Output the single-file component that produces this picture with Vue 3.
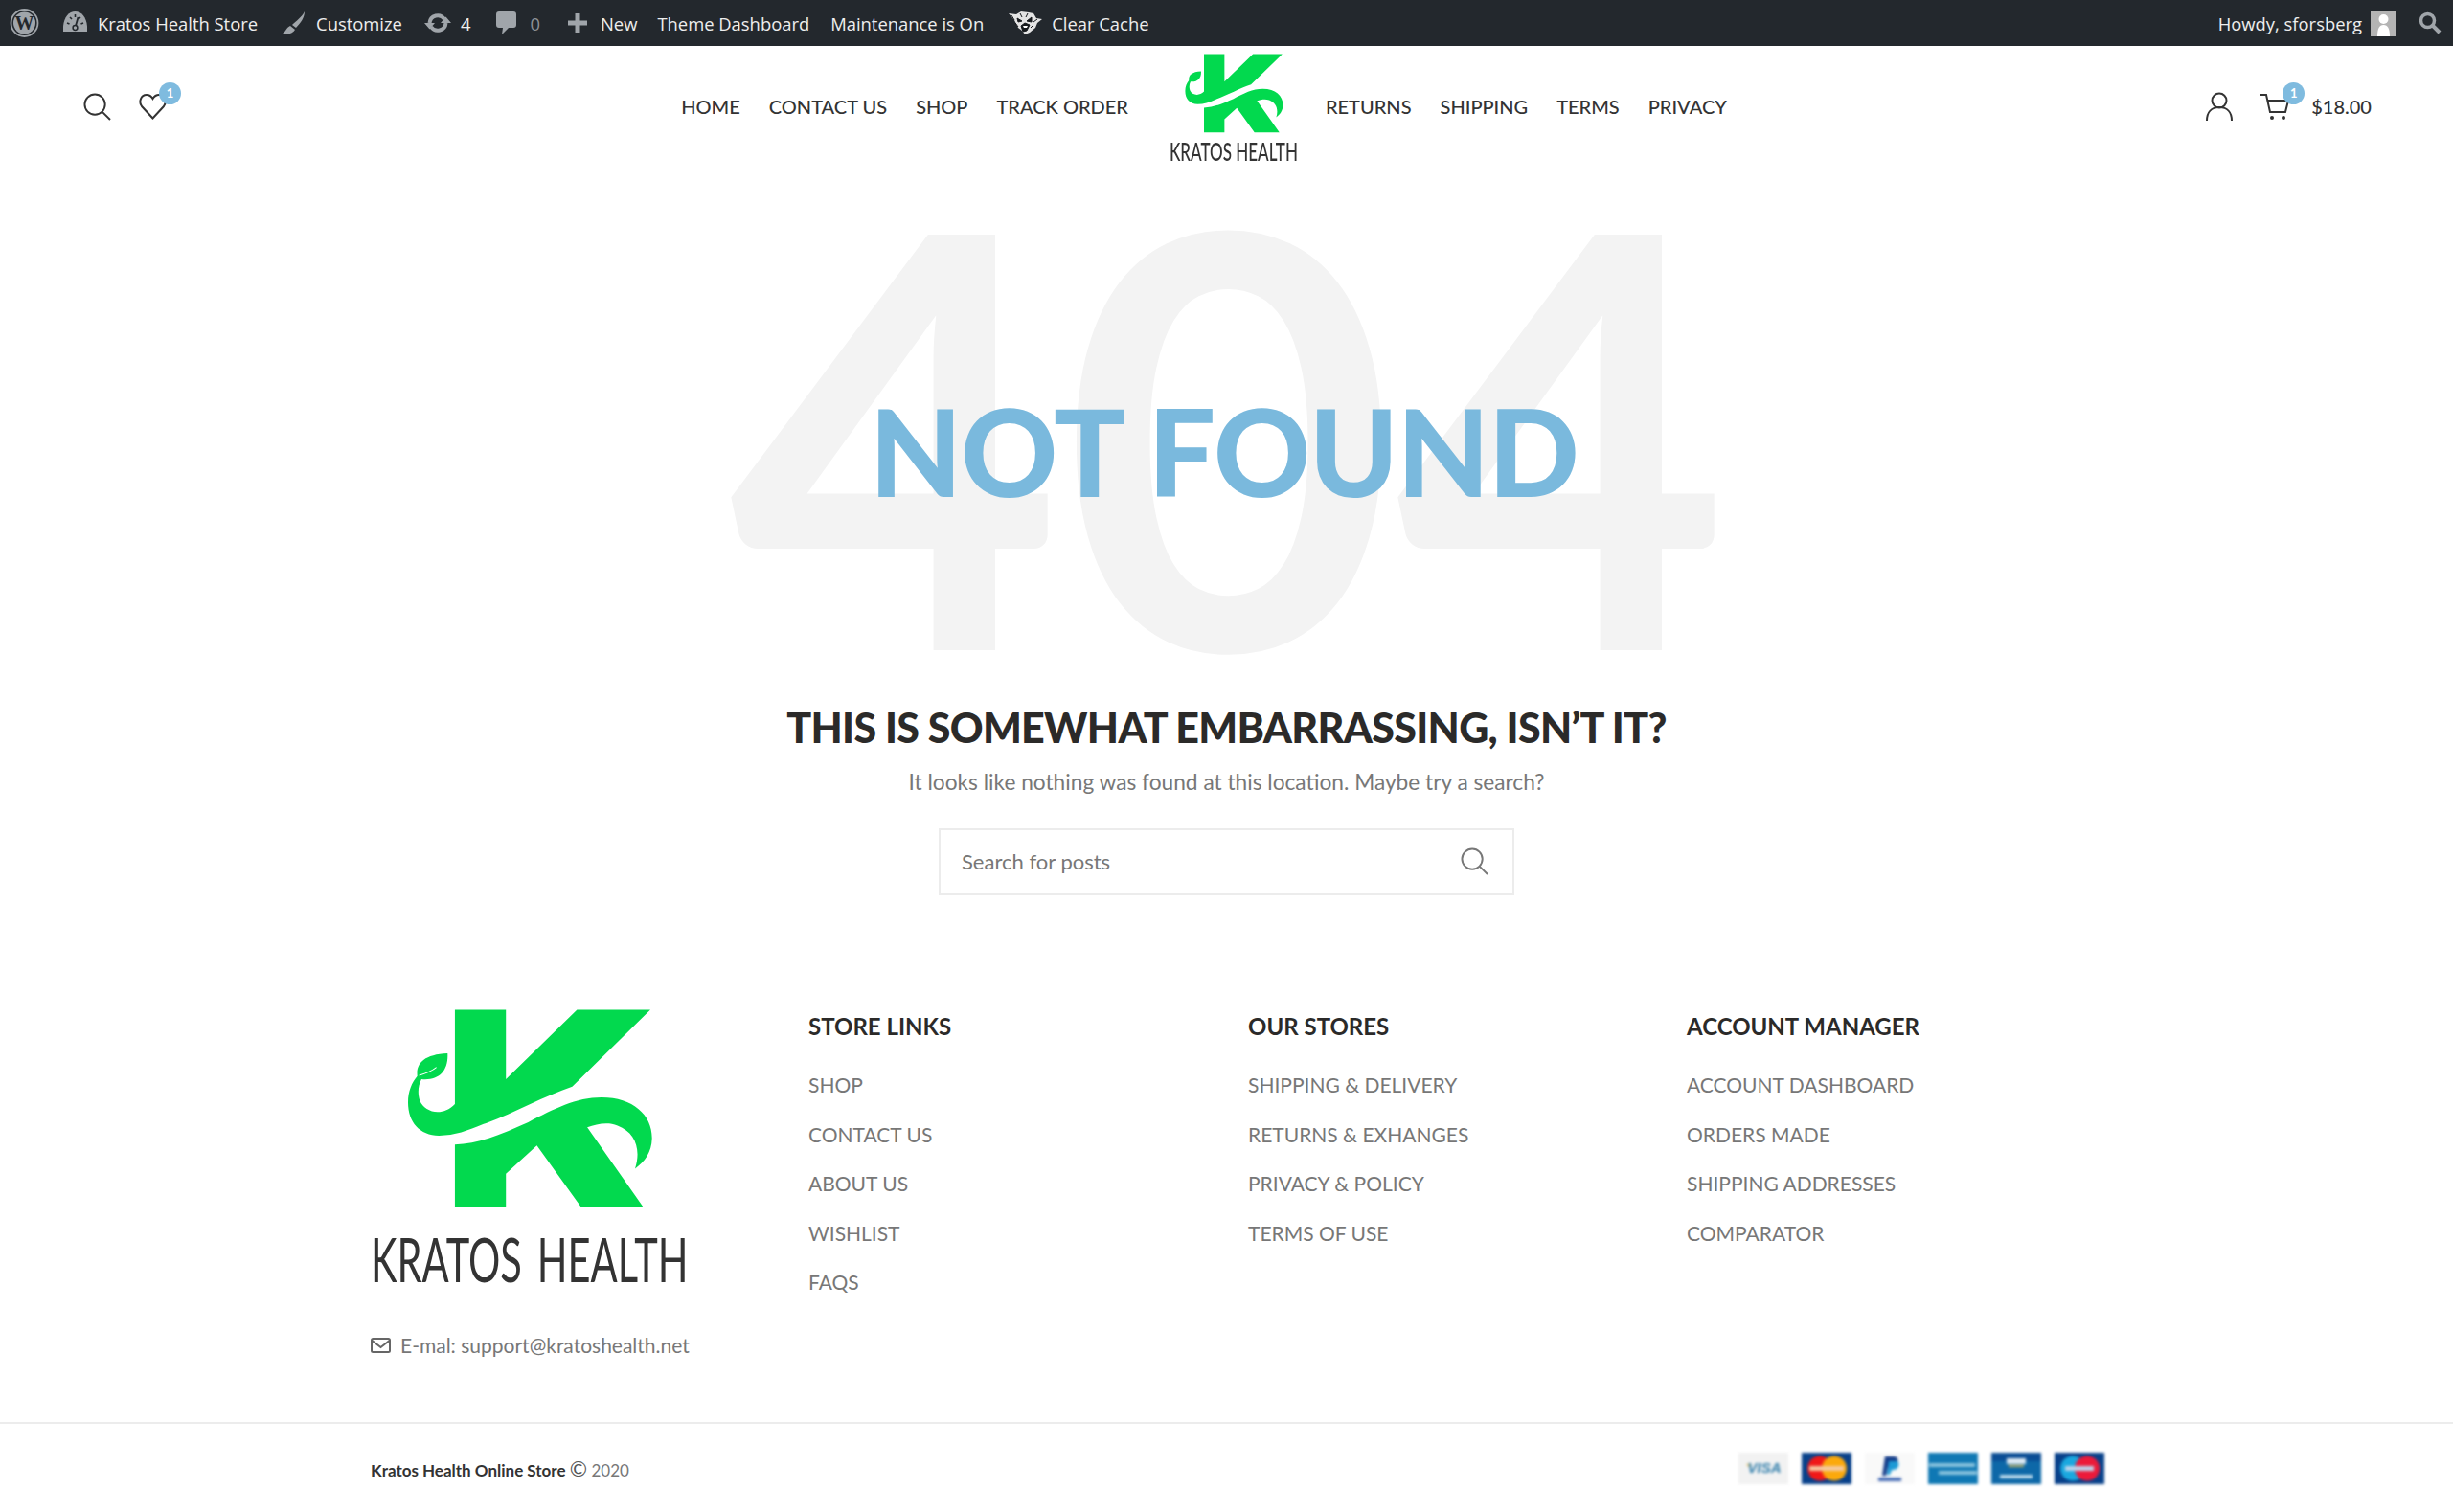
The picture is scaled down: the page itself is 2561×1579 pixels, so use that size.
<script setup>
const storeLinks = ["SHOP", "CONTACT US", "ABOUT US", "WISHLIST", "FAQS"]
const ourStores = ["SHIPPING & DELIVERY", "RETURNS & EXHANGES", "PRIVACY & POLICY", "TERMS OF USE"]
const accountLinks = ["ACCOUNT DASHBOARD", "ORDERS MADE", "SHIPPING ADDRESSES", "COMPARATOR"]
const navLeft = ["HOME", "CONTACT US", "SHOP", "TRACK ORDER"]
const navRight = ["RETURNS", "SHIPPING", "TERMS", "PRIVACY"]

const upperK = "M340 70H500V280L723 70H953L708 302C620 330 520 385 430 415C380 435 340 450 290 450C230 450 193 410 193 350C193 315 205 290 222 270C218 235 240 205 317 202C320 255 290 285 235 280C225 300 222 320 230 345C245 380 300 395 340 355Z"
const lowerK = "M340 477C420 475 500 440 570 410C650 370 720 335 800 335C900 335 960 390 958 460C957 500 935 530 905 550C925 490 905 440 850 420C820 408 785 415 755 425L930 665H735L597 480L500 565V665H340Z"
</script>

<template>
  <div class="page">
    <div class="adminbar">
      <svg class="wp" viewBox="0 0 30 30">
        <circle cx="15" cy="15" r="14" fill="none" stroke="#a0a5aa" stroke-width="1.8" />
        <circle cx="15" cy="15" r="11.500" fill="#a0a5aa" />
        <text x="15" y="22" text-anchor="middle" class="wp-w">W</text>
      </svg>
      <svg class="ab-ic dash" viewBox="0 0 25 21">
        <path d="M0 21C-1 8 5 0 12.500 0S26 8 25 21z" fill="#a0a5aa" />
        <path d="M4 12l2.500 1M7 6l2 2M12.500 3v3M18 6l-2 2M21 12l-2.500 1" stroke="#23282d" stroke-width="1.600" />
        <path d="M15.500 6L13 15" stroke="#23282d" stroke-width="1.800" />
        <circle cx="12.500" cy="17" r="2.400" fill="none" stroke="#23282d" stroke-width="1.500" />
      </svg>
      <span class="ab-t t1">Kratos Health Store</span>
      <svg class="ab-ic brush" viewBox="0 0 26 24">
        <path d="M25 0C22 6 16 10 12 14l4 3C21 12 25 6 25 0zM10 15C5 17 6 22 0 24c6 1 13-1 15-5z" fill="#a0a5aa" />
      </svg>
      <span class="ab-t t2">Customize</span>
      <svg class="ab-ic upd" viewBox="0 0 28 20">
        <path d="M5.500 10A8.500 8.500 0 0 1 21 6" fill="none" stroke="#a0a5aa" stroke-width="4" />
        <path d="M22.500 10A8.500 8.500 0 0 1 7 14" fill="none" stroke="#a0a5aa" stroke-width="4" />
        <path d="M17 10h11l-5.500-6.500zM11 10H0l5.500 6.500z" fill="#a0a5aa" />
      </svg>
      <span class="ab-t t3">4</span>
      <svg class="ab-ic cmt" viewBox="0 0 21 24">
        <path d="M3 0h15a3 3 0 0 1 3 3v11a3 3 0 0 1-3 3h-5l-7 7 1-7H3a3 3 0 0 1-3-3V3a3 3 0 0 1 3-3z" fill="#a0a5aa" />
      </svg>
      <span class="ab-t t4">0</span>
      <svg class="ab-ic plus" viewBox="0 0 20 20">
        <path d="M7.500 0h5v7.500H20v5h-7.500V20h-5v-7.500H0v-5h7.500z" fill="#a0a5aa" />
      </svg>
      <span class="ab-t t5">New</span>
      <span class="ab-t t6">Theme Dashboard</span>
      <span class="ab-t t7">Maintenance is On</span>
      <svg class="ab-ic tiger" viewBox="0 0 35 24">
        <path d="M0 2l8 1 5-3 8 1 5 1 3 5 6 1-5 4-2 5-6 5-5 2-3-4-4-3-4-8z" fill="#e4e4e4" />
        <path d="M9 7l5 3-4 1zM24 6l-5 4 5 1zM13 15l4-3 5 2-3 6-4 1zM3 4l3 5M30 8l-4 3M12 2l2 4M20 2l-2 4M7 12l3 4M26 14l-3 3" fill="#16191c" stroke="#16191c" />
        <path d="M15 15h5l-1 2h-3z" fill="#fff" />
      </svg>
      <span class="ab-t t8">Clear Cache</span>
      <span class="ab-t howdy">Howdy, sforsberg</span>
      <svg class="avatar" viewBox="0 0 27 27">
        <rect width="27" height="27" fill="#b4b4b4" />
        <circle cx="13.500" cy="9" r="5" fill="#fff" />
        <path d="M7 27c0-8 2-12 6.500-12S20 19 20 27z" fill="#fff" />
      </svg>
      <svg class="ab-search" viewBox="0 0 24 24">
        <circle cx="9.500" cy="9.500" r="7" fill="none" stroke="#a0a5aa" stroke-width="3.500" />
        <path d="M14.500 14.500l7.500 7.500" stroke="#a0a5aa" stroke-width="4" />
      </svg>
    </div>

    <header class="site-header">
      <div class="tools-left">
        <svg class="i-search" viewBox="0 0 30 30">
          <circle cx="12.500" cy="12.500" r="11" fill="none" stroke="#333" stroke-width="2" />
          <path d="M20.500 20.500l8.500 8.500" stroke="#333" stroke-width="2" />
        </svg>
        <div class="ic-wrap">
          <svg class="i-heart" viewBox="0 0 29 28">
            <path d="M14.500 26.500L3 14C-.5 9.500 2 2 8 2c3 0 5 1.500 6.500 4C16 3.500 18 2 21 2c6 0 8.500 7.500 5 12z" fill="none" stroke="#333" stroke-width="2" />
          </svg>
          <span class="badge">1</span>
        </div>
      </div>

      <nav class="nav">
        <a v-for="item in navLeft" :key="item">{{ item }}</a>
        <div class="head-logo">
          <svg viewBox="190 60 772 610" preserveAspectRatio="none">
            <path :d="upperK" fill="#02d94e" />
            <path :d="lowerK" fill="#02d94e" />
          </svg>
          <span class="head-logo-t"><span>KRATOS HEALTH</span></span>
        </div>
        <a v-for="item in navRight" :key="item">{{ item }}</a>
      </nav>

      <div class="tools-right">
        <svg class="i-user" viewBox="0 0 28 30">
          <circle cx="14" cy="9" r="7.500" fill="none" stroke="#333" stroke-width="2" />
          <path d="M1 30c0-9 5-14 13-14s13 5 13 14" fill="none" stroke="#333" stroke-width="2" />
        </svg>
        <div class="ic-wrap">
          <svg class="i-cart" viewBox="0 0 31 29">
            <path d="M0 2h6l4 18h16l3-12H8" fill="none" stroke="#333" stroke-width="2" />
            <circle cx="12" cy="26" r="2" fill="#333" />
            <circle cx="24" cy="26" r="2" fill="#333" />
          </svg>
          <span class="badge cart-badge">1</span>
        </div>
        <span class="price">$18.00</span>
      </div>
    </header>

    <main class="hero">
      <div class="big-wrap">
        <div class="big">404</div>
        <div class="not-found">NOT FOUND</div>
      </div>
      <h2 class="embarrass">THIS IS SOMEWHAT EMBARRASSING, ISN’T IT?</h2>
      <p class="lead">It looks like nothing was found at this location. Maybe try a search?</p>
      <div class="search-box">
        <span class="placeholder">Search for posts</span>
        <svg class="i-search2" viewBox="0 0 30 30">
          <circle cx="12.500" cy="12.500" r="11" fill="none" stroke="#777" stroke-width="2" />
          <path d="M20.500 20.500l8.500 8.500" stroke="#777" stroke-width="2" />
        </svg>
      </div>
    </main>

    <footer class="site-footer">
      <div class="foot-cols">
        <div class="foot-brand">
          <svg class="foot-logo" viewBox="190 60 772 610" preserveAspectRatio="none">
            <path :d="upperK" fill="#02d94e" />
            <path :d="lowerK" fill="#02d94e" />
            <path d="M228 268C250 262 268 255 282 244" fill="none" stroke="#fff" stroke-width="3" />
          </svg>
          <div class="foot-logo-t"><span>KRATOS HEALTH</span></div>
          <div class="email">
            <svg viewBox="0 0 21 16">
              <rect x="1" y="1" width="19" height="14" rx="1.500" fill="none" stroke="#666" stroke-width="2" />
              <path d="M1.500 3l9 7 9-7" fill="none" stroke="#666" stroke-width="2" />
            </svg>
            <span>E-mal: support@kratoshealth.net</span>
          </div>
        </div>
        <div class="foot-col">
          <h4>STORE LINKS</h4>
          <a v-for="l in storeLinks" :key="l">{{ l }}</a>
        </div>
        <div class="foot-col">
          <h4>OUR STORES</h4>
          <a v-for="l in ourStores" :key="l">{{ l }}</a>
        </div>
        <div class="foot-col">
          <h4>ACCOUNT MANAGER</h4>
          <a v-for="l in accountLinks" :key="l">{{ l }}</a>
        </div>
      </div>
      <div class="copy-row">
        <div class="copy"><b>Kratos Health Online Store</b> <span class="c-mark">©</span> 2020</div>
        <div class="pays">
          <svg viewBox="0 0 52 33"><rect width="52" height="33" fill="#f2f2f2" /><path d="M8 12h5l-2 3z" fill="#e8b84a" /><text x="27" y="21" text-anchor="middle" class="pay-visa">VISA</text></svg>
          <svg viewBox="0 0 52 33"><rect width="52" height="33" fill="#07408a" /><circle cx="19" cy="16.500" r="13" fill="#f01818" /><circle cx="34" cy="16.500" r="13" fill="#fba90c" /><rect x="8" y="14" width="36" height="5" fill="#f5c9a0" /></svg>
          <svg viewBox="0 0 52 33"><rect width="52" height="33" fill="#f9f9f9" /><path d="M21 4h9c4 0 5 3 4 6s-4 5-8 5h-2l-2 9h-4z" fill="#153d8a" /><path d="M25 9h7c3 0 4 2 3 5s-3 4-7 4l-2 5h-3z" fill="#1d9ad6" /><rect x="14" y="26" width="24" height="4" fill="#4a6fb8" /></svg>
          <svg viewBox="0 0 52 33"><rect width="52" height="33" fill="#0f78b4" /><rect x="1" y="11" width="48" height="4" fill="#8cc5df" /><rect x="11" y="19" width="40" height="4" fill="#8cc5df" /></svg>
          <svg viewBox="0 0 52 33"><rect width="52" height="33" fill="#0d68a8" /><rect width="52" height="9" fill="#0a4d95" /><rect x="16" y="6" width="20" height="6" fill="#dfeaf3" /><rect x="18" y="13" width="16" height="2" fill="#cbb55a" /><rect x="9" y="23" width="34" height="4" fill="#b8d8ea" /></svg>
          <svg viewBox="0 0 52 33"><rect width="52" height="33" fill="#07408a" /><circle cx="19" cy="16.500" r="13" fill="#1aa8df" /><circle cx="34" cy="16.500" r="13" fill="#ec1a3a" /><rect x="11" y="14" width="30" height="5" fill="#bcd4ec" /></svg>
        </div>
      </div>
    </footer>
  </div>
</template>

<style>
html, body { margin: 0; background: #fff; }
</style>

<style scoped>
.page {
  width: 2561px;
  height: 1579px;
  overflow: hidden;
  font-family: Lato, "Liberation Sans", sans-serif;
  color: #333;
  background: #fff;
}

/* admin bar */
.adminbar {
  height: 48px;
  background: #23282d;
  display: flex;
  align-items: center;
  font-family: "Open Sans", sans-serif;
  font-size: 18.400px;
  color: #eee;
  white-space: nowrap;
}
.ab-t { display: block; }
.wp { width: 31px; height: 30px; margin-left: 10px; }
.wp-w { font-family: "Liberation Serif", serif; font-size: 20px; font-weight: 700; fill: #23282d; }
.ab-ic { display: block; flex: none; }
.dash { width: 25px; height: 21px; margin: 0 0 3px 25px; }
.t1 { margin-left: 11px; }
.brush { width: 26px; height: 24px; margin-left: 24px; }
.t2 { margin-left: 11px; }
.upd { width: 28px; height: 20px; margin-left: 23px; }
.t3 { margin-left: 10px; }
.cmt { width: 21px; height: 24px; margin-left: 27px; }
.t4 { margin-left: 14px; color: #8d9196; }
.plus { width: 20px; height: 20px; margin-left: 29px; }
.t5 { margin-left: 14px; }
.t6 { margin-left: 21px; }
.t7 { margin-left: 22px; }
.tiger { width: 35px; height: 24px; margin-left: 26px; }
.t8 { margin-left: 10px; }
.howdy { margin-left: auto; }
.avatar { width: 27px; height: 27px; margin-left: 9px; }
.ab-search { width: 24px; height: 24px; margin-left: 23px; margin-right: 12px; }

/* header */
.site-header {
  height: 142px;
  position: relative;
  display: flex;
  align-items: center;
  justify-content: space-between;
  padding: 0 85px 16px 87px;
  box-sizing: border-box;
}
.tools-left, .tools-right { display: flex; align-items: center; width: 300px; }
.tools-right { justify-content: flex-end; width: 349px; }
.i-search { width: 29px; height: 29px; }
.i-heart { width: 29px; height: 28px; display: block; }
.tools-left .ic-wrap { margin-left: 29px; }
.ic-wrap { position: relative; }
.badge {
  position: absolute;
  left: 21px;
  top: -11px;
  width: 23px;
  height: 23px;
  border-radius: 50%;
  background: #7fbbdf;
  color: #fff;
  font-size: 13px;
  font-weight: 700;
  line-height: 23px;
  text-align: center;
}
.cart-badge { left: 23px; }
.nav {
  display: flex;
  align-items: center;
  gap: 30px;
  font-size: 20px;
  font-weight: 500;
  color: #333;
}
.head-logo {
  width: 135px;
  margin: 3px -2px 0 13px;
  display: flex;
  flex-direction: column;
  align-items: center;
}
.head-logo svg { width: 103px; height: 84px; display: block; }
.head-logo-t {
  align-self: stretch;
  font-size: 27px;
  line-height: 26px;
  height: 26px;
  margin-top: 6px;
  white-space: nowrap;
  color: #333;
}
.head-logo-t span { display: inline-block; transform: scaleX(.63); transform-origin: left center; }
.i-user { width: 28px; height: 30px; }
.i-cart { width: 31px; height: 29px; display: block; }
.tools-right .ic-wrap { margin-left: 29px; }
.price { margin-left: 22px; font-size: 20px; font-weight: 500; }

/* 404 */
.hero { display: flex; flex-direction: column; align-items: center; padding-top: 7px; }
.big-wrap { position: relative; text-align: center; height: 500px; width: 100%; }
.big {
  font-size: 600px;
  line-height: 500px;
  padding-left: 5px;
  color: #f3f3f3;
  font-weight: 700;
}
.not-found {
  position: absolute;
  left: 0;
  right: 6px;
  top: 189px;
  font-size: 125px;
  line-height: 170px;
  font-weight: 900;
  letter-spacing: -1.500px;
  color: #7ab9dd;
}
.embarrass {
  margin: 38px 0 0;
  font-size: 43px;
  line-height: 50px;
  font-weight: 900;
  letter-spacing: -.7px;
  color: #2b2a29;
}
.lead {
  margin: 15px 0 0;
  font-size: 22.700px;
  line-height: 34px;
  color: #777;
}
.search-box {
  margin-top: 31px;
  width: 601px;
  height: 70px;
  box-sizing: border-box;
  border: 2px solid #ececec;
  display: flex;
  align-items: center;
  justify-content: space-between;
  padding: 0 25px 2px 22px;
  font-size: 22px;
  color: #777;
}
.i-search2 { width: 29px; height: 29px; }

/* footer */
.site-footer { margin-top: 109px; }
.foot-cols {
  display: grid;
  grid-template-columns: 459px 459px 458px 459px;
  padding-left: 385px;
  height: 441px;
  box-sizing: border-box;
}
.foot-brand { padding-left: 2px; padding-top: 7px; }
.foot-logo { display: block; width: 257px; height: 211px; margin-left: 38px; }
.foot-logo-t {
  font-size: 63px;
  line-height: 50px;
  height: 50px;
  margin-top: 28px;
  white-space: nowrap;
  word-spacing: 8px;
  color: #333;
}
.foot-logo-t span { display: inline-block; transform: scaleX(.66); transform-origin: left center; }
.email {
  margin-top: 52px;
  display: flex;
  align-items: center;
  gap: 10px;
  font-size: 21px;
  color: #777;
  white-space: nowrap;
}
.email svg { width: 21px; height: 16px; flex: none; }
.foot-col { display: flex; flex-direction: column; padding-top: 11px; }
.foot-col h4 {
  margin: 0 0 18px;
  font-size: 24px;
  line-height: 34px;
  font-weight: 700;
  color: #2b2a29;
}
.foot-col a {
  display: block;
  font-size: 21px;
  line-height: 51.500px;
  color: #777;
}
.copy-row {
  border-top: 2px solid #ececec;
  height: 95px;
  box-sizing: border-box;
  display: flex;
  align-items: center;
  justify-content: space-between;
  padding: 0 364px 0 387px;
}
.copy { font-size: 17px; color: #777; }
.copy b { font-weight: 700; color: #333; }
.c-mark { font-size: 22px; color: #555; }
.pays { display: flex; gap: 14px; }
.pays svg { width: 52px; height: 33px; display: block; filter: blur(1.5px); }
.pay-visa { font-family: "Liberation Sans", sans-serif; font-size: 15px; font-weight: 700; font-style: italic; fill: #2b7aa8; }
</style>
